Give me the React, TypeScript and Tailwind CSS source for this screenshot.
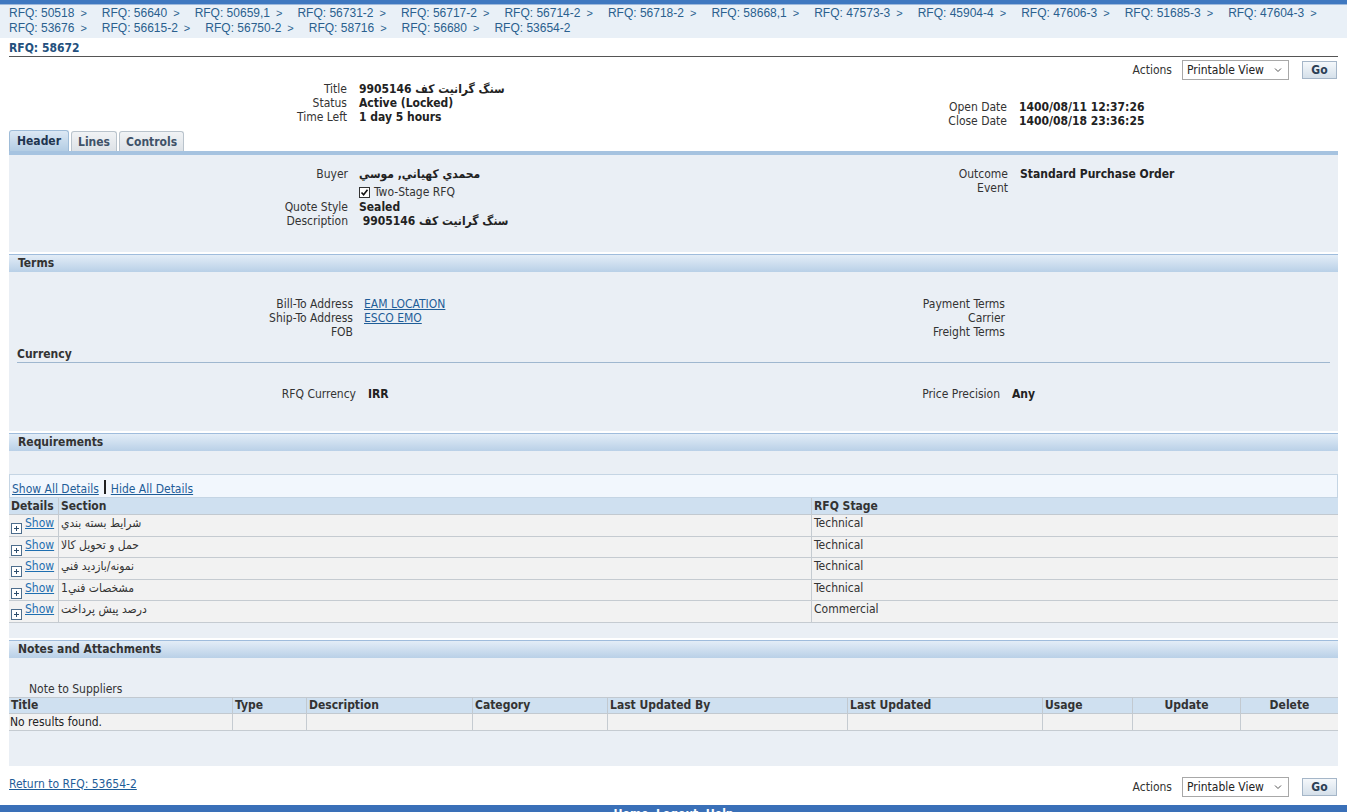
import React from "react";

const crumbs = [
  "RFQ: 50518",
  "RFQ: 56640",
  "RFQ: 50659,1",
  "RFQ: 56731-2",
  "RFQ: 56717-2",
  "RFQ: 56714-2",
  "RFQ: 56718-2",
  "RFQ: 58668,1",
  "RFQ: 47573-3",
  "RFQ: 45904-4",
  "RFQ: 47606-3",
  "RFQ: 51685-3",
  "RFQ: 47604-3",
  "RFQ: 53676",
  "RFQ: 56615-2",
  "RFQ: 56750-2",
  "RFQ: 58716",
  "RFQ: 56680",
  "RFQ: 53654-2",
];

const requirements = [
  { section: "شرايط بسته بندي", stage: "Technical" },
  { section: "حمل و تحويل كالا", stage: "Technical" },
  { section: "نمونه/بازديد فني", stage: "Technical" },
  { section: "مشخصات فني1", stage: "Technical" },
  { section: "درصد پيش پرداخت", stage: "Commercial" },
];

const font = { fontFamily: '"DejaVu Sans Condensed", "DejaVu Sans", Tahoma, sans-serif' };

function SectionBar({ title }: { title: string }) {
  return (
    <div className="h-[18px] border-t border-[#9fbcdc] bg-gradient-to-b from-[#e3edf7] to-[#b9d0e7] pl-[9px] text-[12px] font-bold leading-[17px] text-[#333]">
      {title}
    </div>
  );
}

function Pair({ label, children }: { label: string; children?: React.ReactNode }) {
  return (
    <>
      <div className="text-right text-[#333]">{label}</div>
      <div className="font-bold text-[#222]">{children}</div>
    </>
  );
}

function ActionsBar() {
  return (
    <div className="flex items-center justify-end gap-[10px]">
      <span className="text-[12px] text-[#333]">Actions</span>
      <div className="flex h-[20px] w-[107px] items-center justify-between border border-[#a8a8a8] bg-white pl-[4px] pr-[6px] text-[12px] text-[#222]">
        <span>Printable View</span>
        <svg width="8" height="6" viewBox="0 0 8 6">
          <path d="M1 1.5 L4 4.5 L7 1.5" stroke="#555" strokeWidth="1" fill="none" />
        </svg>
      </div>
      <div className="ml-[3px] flex h-[18px] w-[35px] items-center justify-center border border-[#a5b6c8] bg-gradient-to-b from-[#f5f8fb] to-[#d5e0ea] text-[12px] font-bold text-[#2b3f55]">
        Go
      </div>
    </div>
  );
}

function PlusBox() {
  return (
    <svg width="11" height="11" viewBox="0 0 11 11" className="mt-[7px] shrink-0">
      <rect x="0.5" y="0.5" width="10" height="10" fill="#fff" stroke="#4d6d8c" />
      <path d="M3 5.5 H8 M5.5 3 V8" stroke="#2d4d6c" strokeWidth="1" />
    </svg>
  );
}

export default function App() {
  return (
    <div className="min-h-[812px] bg-white text-[12px] leading-[14px] text-[#222]" style={font}>
      <div className="h-[4px] bg-[#3f78c0]" />
      <div className="h-[1px] bg-[#9db9dc]" />
      {/* breadcrumbs */}
      <div
        className="flex flex-wrap bg-[#e9f0f7] px-[9px] pt-[1px] pb-[2px] text-[12px] leading-[15px] text-[#2a5f8e]"
        style={{ fontFamily: '"Liberation Sans", Arial, sans-serif' }}
      >
        {crumbs.map((c, i) => (
          <span key={i} className="mr-[15px] whitespace-nowrap">
            {c}
            {i < crumbs.length - 1 && <span className="ml-[6px] text-[11px]">&gt;</span>}
          </span>
        ))}
      </div>

      <div className="px-[9px]">
        <div className="mt-[3px] border-b border-[#555] pb-[1px] text-[12px] font-bold leading-[14px] text-[#23507d]">
          RFQ: 58672
        </div>

        <div className="mt-[3px] mr-[1px]">
          <ActionsBar />
        </div>

        {/* info block */}
        <div className="mt-[2px] flex">
          <div className="w-[660px]">
            <div className="grid grid-cols-[338px_1fr] gap-x-[12px]">
              <Pair label="Title">9905146 سنگ گرانيت كف</Pair>
              <Pair label="Status">Active (Locked)</Pair>
              <Pair label="Time Left">1 day 5 hours</Pair>
            </div>
          </div>
          <div className="flex-1 pt-[18px]">
            <div className="grid grid-cols-[338px_1fr] gap-x-[12px]">
              <Pair label="Open Date">1400/08/11 12:37:26</Pair>
              <Pair label="Close Date">1400/08/18 23:36:25</Pair>
            </div>
          </div>
        </div>

        {/* tabs */}
        <div className="mt-[2px] flex items-end gap-[2px]">
          <div className="flex h-[21px] items-center rounded-t-[3px] border border-b-0 border-[#9fbcd8] bg-gradient-to-b from-[#dce8f4] to-[#b4cde4] px-[7px] font-bold text-[#1f3550]">
            Header
          </div>
          <div className="flex h-[20px] items-center rounded-t-[3px] border border-b-0 border-[#b9c3cc] bg-gradient-to-b from-[#f1f3f5] to-[#dde2e7] px-[6px] font-bold text-[#3f5268]">
            Lines
          </div>
          <div className="flex h-[20px] items-center rounded-t-[3px] border border-b-0 border-[#b9c3cc] bg-gradient-to-b from-[#f1f3f5] to-[#dde2e7] px-[6px] font-bold text-[#3f5268]">
            Controls
          </div>
        </div>
        <div className="h-[4px] bg-[#a6c3e0]" />

        {/* main panel */}
        <div className="bg-[#eaeff5]">
          {/* header section */}
          <div className="flex pt-[12px] pb-[24px]">
            <div className="w-[660px]">
              <div className="grid grid-cols-[339px_1fr] gap-x-[11px]">
                <Pair label="Buyer">محمدي كهياني, موسي</Pair>
                <div />
                <div className="flex items-center gap-[4px] pt-[4px] pb-[1px] font-normal">
                  <span className="flex h-[11px] w-[11px] items-center justify-center border border-[#333] bg-white">
                    <svg width="9" height="9" viewBox="0 0 9 9">
                      <path d="M1.5 4.5 L3.6 6.8 L7.5 1.8" stroke="#111" strokeWidth="1.6" fill="none" />
                    </svg>
                  </span>
                  <span className="text-[#333]">Two-Stage RFQ</span>
                </div>
                <Pair label="Quote Style">Sealed</Pair>
                <Pair label="Description">&nbsp;9905146 سنگ گرانيت كف</Pair>
              </div>
            </div>
            <div className="flex-1">
              <div className="grid grid-cols-[339px_1fr] gap-x-[12px]">
                <Pair label="Outcome">Standard Purchase Order</Pair>
                <Pair label="Event" />
              </div>
            </div>
          </div>

          <div className="h-[2px] bg-white" />
          <SectionBar title="Terms" />

          {/* terms */}
          <div className="flex pt-[25px]">
            <div className="w-[660px]">
              <div className="grid grid-cols-[344px_1fr] gap-x-[11px]">
                <div className="text-right text-[#333]">Bill-To Address</div>
                <div className="text-[#1f5d98] underline">EAM LOCATION</div>
                <div className="text-right text-[#333]">Ship-To Address</div>
                <div className="text-[#1f5d98] underline">ESCO EMO</div>
                <div className="text-right text-[#333]">FOB</div>
                <div />
              </div>
            </div>
            <div className="flex-1">
              <div className="grid grid-cols-[336px_1fr] gap-x-[12px]">
                <Pair label="Payment Terms" />
                <Pair label="Carrier" />
                <Pair label="Freight Terms" />
              </div>
            </div>
          </div>
          <div className="mx-[8px] mt-[8px] border-b border-[#9fb7cf] pb-[1px] font-bold text-[#333]">Currency</div>
          <div className="flex pt-[24px] pb-[30px]">
            <div className="w-[660px]">
              <div className="grid grid-cols-[347px_1fr] gap-x-[12px]">
                <Pair label="RFQ Currency">IRR</Pair>
              </div>
            </div>
            <div className="flex-1">
              <div className="grid grid-cols-[331px_1fr] gap-x-[12px]">
                <Pair label="Price Precision">Any</Pair>
              </div>
            </div>
          </div>

          <div className="h-[2px] bg-white" />
          <SectionBar title="Requirements" />
          <div className="h-[23px]" />

          {/* requirements table */}
          <div className="border border-[#c5d5e4] bg-[#f2f7fd] pl-[2px] pt-[4px] pb-[1px]">
            <span className="text-[#1f5d98] underline">Show All Details</span>
            <span className="mx-[5px] inline-block h-[14px] w-[2px] translate-y-[1px] bg-[#222]" />
            <span className="text-[#1f5d98] underline">Hide All Details</span>
          </div>
          <div className="grid grid-cols-[49px_753px_1fr] bg-[#f2f2f2]">
            <div className="h-[17px] border-b border-[#c2c9d0] bg-[#cfe0f0] pl-[2px] font-bold leading-[16px] text-[#333]">Details</div>
            <div className="h-[17px] border-b border-l border-[#c2c9d0] bg-[#cfe0f0] pl-[2px] font-bold leading-[16px] text-[#333]">Section</div>
            <div className="h-[17px] border-b border-l border-[#c2c9d0] bg-[#cfe0f0] pl-[2px] font-bold leading-[16px] text-[#333]">RFQ Stage</div>
            {requirements.map((r, i) => (
              <React.Fragment key={i}>
                <div className="flex h-[21.5px] items-start gap-[3px] border-b border-[#c5cbd1] pl-[2px] pt-[1px]">
                  <PlusBox />
                  <span className="text-[#1f6fb0] underline">Show</span>
                </div>
                <div className="h-[21.5px] border-b border-l border-[#c5cbd1] pl-[2px] pt-[1px] text-[#333]">
                  <span dir="rtl">{r.section}</span>
                </div>
                <div className="h-[21.5px] border-b border-l border-[#c5cbd1] pl-[2px] pt-[1px] text-[#333]">{r.stage}</div>
              </React.Fragment>
            ))}
          </div>
          <div className="h-[15px]" />

          <div className="h-[2px] bg-white" />
          <SectionBar title="Notes and Attachments" />
          <div className="pl-[20px] pt-[24px] pb-[1px] text-[#333]">Note to Suppliers</div>
          <div className="grid grid-cols-[223px_74px_166px_135px_240px_195px_90px_108px_1fr] bg-[#f2f2f2]">
            {["Title", "Type", "Description", "Category", "Last Updated By", "Last Updated", "Usage"].map((h, i) => (
              <div
                key={h}
                className={`h-[17px] border-t border-b border-[#c2c9d0] bg-[#cfe0f0] pl-[2px] font-bold leading-[15px] text-[#333] ${i > 0 ? "border-l" : ""}`}
              >
                {h}
              </div>
            ))}
            <div className="h-[17px] border-t border-b border-l border-[#c2c9d0] bg-[#cfe0f0] text-center font-bold leading-[15px] text-[#333]">Update</div>
            <div className="h-[17px] border-t border-b border-l border-[#c2c9d0] bg-[#cfe0f0] text-center font-bold leading-[15px] text-[#333]">Delete</div>
            <div className="h-[17px] border-b border-[#c5cbd1] pl-[1px] pt-[1px] text-[#222]">No results found.</div>
            {[0, 1, 2, 3, 4, 5, 6, 7].map((k) => (
              <div key={k} className="h-[17px] border-b border-l border-[#c5cbd1]" />
            ))}
          </div>
          <div className="h-[35px]" />
        </div>

        {/* bottom */}
        <div className="mt-[10px] flex items-start justify-between">
          <span className="mt-[1px] text-[#1f5d98] underline">Return to RFQ: 53654-2</span>
          <div className="mt-[1px] mr-[1px]">
            <ActionsBar />
          </div>
        </div>
      </div>
      <div className="mt-[8px] h-[30px] overflow-hidden bg-[#3a70b8] text-center text-[12px] leading-[14px] text-white">
        <span className="relative top-[2px] font-bold">Home&nbsp;&nbsp;Logout&nbsp;&nbsp;Help</span>
      </div>
    </div>
  );
}
